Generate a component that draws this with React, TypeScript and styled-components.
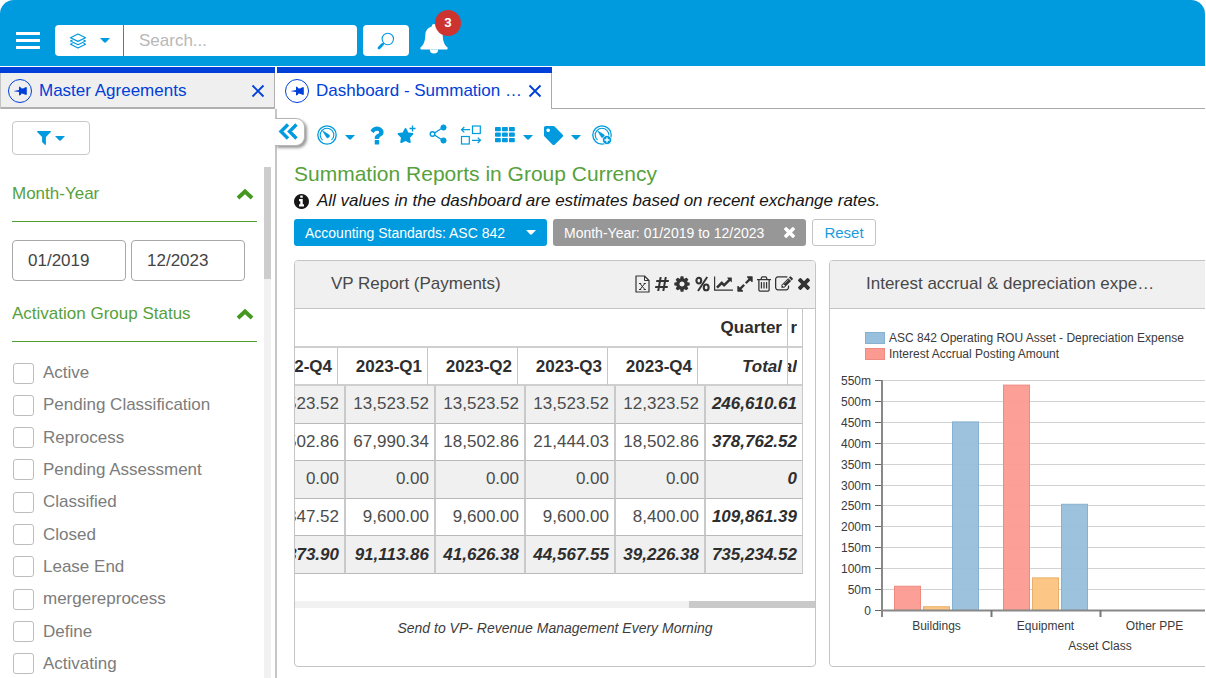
import React from "react";
import styled, { createGlobalStyle } from "styled-components";
import { FaHashtag, FaStar, FaTag } from "react-icons/fa";

const BLUE = "#009ade";
const NAVY = "#0040d8";
const LINE = "#c4c4c4";

const Global = createGlobalStyle`
  *, *::before, *::after { box-sizing: border-box; }
  body { margin: 0; background: #fff; color: #3c3c3c; font: 17px/20px "Liberation Sans", Arial, sans-serif; }
  button, input { font: inherit; }
  button { margin: 0; padding: 0; border: 0; background: none; color: inherit; cursor: pointer; display: inline-flex; align-items: center; justify-content: center; }
  svg { display: block; flex: none; }
`;

/* ---------- icons ---------- */

const GLYPHS = {
  close: "M1298 1322q0 40-28 68l-136 136q-28 28-68 28t-68-28l-294-294-294 294q-28 28-68 28t-68-28l-136-136q-28-28-28-68t28-68l294-294-294-294q-28-28-28-68t28-68l136-136q28-28 68-28t68 28l294 294 294-294q28-28 68-28t68 28l136 136q28 28 28 68t-28 68l-294 294 294 294q28 28 28 68z",
  chart: "M2048 1536v128h-2048v-1536h128v1408h1920zm-128-1248v435q0 21-19.5 29.5t-35.5-7.5l-121-121-633 633q-10 10-23 10t-23-10l-233-233-416 416-192-192 585-585q10-10 23-10t23 10l233 233 464-464-121-121q-16-16-7.5-35.5t29.5-19.5h435q14 0 23 9t9 23z",
  expand: "M883 1056q0 13-10 23l-332 332 144 144q19 19 19 45t-19 45-45 19h-448q-26 0-45-19t-19-45v-448q0-26 19-45t45-19 45 19l144 144 332-332q10-10 23-10t23 10l114 114q10 10 10 23zm781-864v448q0 26-19 45t-45 19-45-19l-144-144-332 332q-10 10-23 10t-23-10l-114-114q-10-10-10-23t10-23l332-332-144-144q-19-19-19-45t19-45 45-19h448q26 0 45 19t19 45z",
  gear: "M1152 896q0-106-75-181t-181-75-181 75-75 181 75 181 181 75 181-75 75-181zm512-109v222q0 12-8 23t-20 13l-185 28q-19 54-39 91 35 50 107 138 10 12 10 25t-9 23q-27 37-99 108t-94 71q-12 0-26-9l-138-108q-44 23-91 38-16 136-29 186-7 28-36 28h-222q-14 0-24.5-8.5t-11.5-21.5l-28-184q-49-16-90-37l-141 107q-10 9-25 9-14 0-25-11-126-114-165-168-7-10-7-23 0-12 8-23 15-21 51-66.5t54-70.5q-27-50-41-99l-183-27q-13-2-21-12.5t-8-23.5v-222q0-12 8-23t19-13l186-28q14-46 39-92-40-57-107-138-10-12-10-24 0-10 9-23 26-36 98.5-107.5t94.5-71.5q13 0 26 10l138 107q44-23 91-38 16-136 29-186 7-28 36-28h222q14 0 24.5 8.5t11.5 21.5l28 184q49 16 90 37l142-107q9-9 24-9 13 0 25 10 129 119 165 170 7 8 7 22 0 12-8 23-15 21-51 66.5t-54 70.5q26 50 41 98l183 28q13 2 21 12.5t8 23.5z",
  trash: "M704 736v576q0 14-9 23t-23 9h-64q-14 0-23-9t-9-23v-576q0-14 9-23t23-9h64q14 0 23 9t9 23zm256 0v576q0 14-9 23t-23 9h-64q-14 0-23-9t-9-23v-576q0-14 9-23t23-9h64q14 0 23 9t9 23zm256 0v576q0 14-9 23t-23 9h-64q-14 0-23-9t-9-23v-576q0-14 9-23t23-9h64q14 0 23 9t9 23zm128 724v-948h-896v948q0 22 7 40.5t14.5 27 10.5 8.500h832q3 0 10.500-8.500t14.500-27 7-40.500zm-672-1076h448l-48-117q-7-9-17-11h-317q-10 2-17 11zm928 32v64q0 14-9 23t-23 9h-96v948q0 83-47 143.500t-113 60.500h-832q-66 0-113-58.500t-47-141.500v-952h-96q-14 0-23-9t-9-23v-64q0-14 9-23t23-9h309l70-167q15-37 54-63t79-26h320q40 0 79 26t54 63l70 167h309q14 0 23 9t9 23z",
  edit: "M888 1184l116-116-152-152-116 116v56h96v96h56zm440-720q-16-16-33 1l-350 350q-17 17-1 33t33-1l350-350q17-17 1-33zm80 594v190q0 119-84.5 203.5t-203.5 84.5h-832q-119 0-203.5-84.5t-84.5-203.5v-832q0-119 84.5-203.5t203.5-84.5h832q63 0 117 25 15 7 18 23 3 17-9 29l-49 49q-14 14-32 8-23-6-45-6h-832q-66 0-113 47t-47 113v832q0 66 47 113t113 47h832q66 0 113-47t47-113v-126q0-13 9-22l64-64q15-15 35-7t20 29zm-96-738l288 288-672 672h-288v-288zm444 132l-92 92-288-288 92-92q28-28 68-28t68 28l152 152q28 28 28 68t-28 68z",
  filter: "M1595 295q17 41-14 70l-493 493v742q0 42-39 59-13 5-25 5-27 0-45-19l-256-256q-19-19-19-45v-486l-493-493q-31-29-14-70 17-39 59-39h1280q42 0 59 39z",
  question: "M1088 1256v240q0 16-12 28t-28 12h-240q-16 0-28-12t-12-28v-240q0-16 12-28t28-12h240q16 0 28 12t12 28zm316-600q0 54-15.5 101t-35 76.5-55 59.5-57.5 43.5-61 35.5q-41 23-68.5 65t-27.5 67q0 17-12 32.5t-28 15.5h-240q-15 0-25.5-18.5t-10.5-37.5v-45q0-83 65-156.5t143-108.5q59-27 84-56t25-76q0-42-46.5-74t-107.5-32q-65 0-108 29-35 25-107 115-13 16-31 16-12 0-25-8l-164-125q-13-10-15.5-25t5.5-28q160-266 464-266 80 0 161 31t146 83 106 127.5 41 158.5z",
  info: "M1152 1376v-160q0-14-9-23t-23-9h-96v-512q0-14-9-23t-23-9h-320q-14 0-23 9t-9 23v160q0 14 9 23t23 9h96v320h-96q-14 0-23 9t-9 23v160q0 14 9 23t23 9h448q14 0 23-9t9-23zm-128-896v-160q0-14-9-23t-23-9h-192q-14 0-23 9t-9 23v160q0 14 9 23t23 9h192q14 0 23-9t9-23zm640 416q0 209-103 385.5t-279.5 279.5-385.5 103-385.5-103-279.5-279.5-103-385.5 103-385.5 279.5-279.5 385.5-103 385.5 103 279.5 279.5 103 385.5z",
};

const Glyph = ({ name, size, box = "0 0 1792 1792" }: { name: keyof typeof GLYPHS; size: number; box?: string }) => (
  <svg width={size} height={size} viewBox={box} fill="currentColor" aria-hidden="true">
    <path d={GLYPHS[name]} />
  </svg>
);

const CLOSE_BOX = "110 366 1188 1188";

const Caret = () => (
  <svg width="10" height="5" viewBox="0 0 10 5" fill="currentColor" aria-hidden="true">
    <path d="M0 0h10L6 4.300Q5 5 4 4.300Z" />
  </svg>
);

const PinIcon = () => (
  <svg width="26" height="26" viewBox="0 0 26 26" fill="currentColor" aria-hidden="true">
    <circle cx="13" cy="13" r="11.500" fill="none" stroke="currentColor" />
    <path d="M7 12.900l5-.9V8.400q1.800.3 2.600 2.200 2.400-.2 3.600-1.300h1.600v7.400h-1.600q-1.200-1.100-3.600-1.300-.8 1.900-2.600 2.200V14l-5-.7z" />
  </svg>
);

const CrossIcon = () => (
  <svg width="14" height="14" viewBox="0 0 14 14" stroke="currentColor" strokeWidth="1.900" aria-hidden="true">
    <path d="M1.500 1.500l11 11M12.500 1.500l-11 11" />
  </svg>
);

const LayersIcon = () => (
  <svg width="18" height="16" viewBox="0 0 18 16" fill="none" stroke="currentColor" strokeWidth="1.200" strokeLinejoin="round" aria-hidden="true">
    <path d="M9 1l7.500 3.700L9 8.400 1.500 4.700z" />
    <path d="M3.500 7L1.500 8 9 11.700 16.500 8l-2-1" />
    <path d="M3.500 10.200l-2 1L9 15l7.500-3.800-2-1" />
  </svg>
);

const SearchIcon = () => (
  <svg width="18" height="18" viewBox="0 0 18 18" fill="none" stroke="currentColor" aria-hidden="true">
    <circle cx="10.800" cy="7" r="5.700" strokeWidth="1.100" />
    <path d="M6.800 11.200l-1.300 1.300" strokeWidth="1.200" />
    <path d="M5.400 12.600l-3.400 3.400" strokeWidth="2.800" strokeLinecap="round" />
  </svg>
);

const BellIcon = () => (
  <svg width="28" height="30" viewBox="0 0 28 30" fill="currentColor" aria-hidden="true">
    <path d="M14 0a2.200 2.200 0 0 1 2.200 2.500c4 1 6.300 4.300 6.500 8.500.2 6 1.300 9.500 4.600 12.300.8.800.4 2.200-.9 2.200H1.600C.3 25.500-.1 24.100.7 23.300 4 20.500 5.100 17 5.300 11c.2-4.200 2.500-7.500 6.500-8.500A2.200 2.200 0 0 1 14 0z" />
    <path d="M9.800 25.500h8.400a4.200 4 0 0 1-8.400 0z" />
  </svg>
);

const GaugeIcon = ({ plus = false }: { plus?: boolean }) => (
  <svg width="20" height="20" viewBox="0 0 20 20" fill="none" stroke="currentColor" aria-hidden="true">
    <circle cx="10" cy="10" r="9.200" strokeWidth="1.300" />
    <path d="M5.600 15.200a6.800 6.800 0 1 1 8.800 0" strokeWidth="1.100" />
    <path d="M5.200 5.400l6.500 4a1.800 1.800 0 1 1-2.600 2.300z" fill="currentColor" strokeWidth=".4" />
    {plus && (
      <>
        <circle cx="15" cy="15" r="4.600" fill="currentColor" stroke="#fff" strokeWidth=".8" />
        <path d="M15 12.500v5M12.500 15h5" stroke="#fff" strokeWidth="1.300" />
      </>
    )}
  </svg>
);

const StarPlusIcon = () => (
  <svg width="20" height="20" viewBox="0 0 20 20" aria-hidden="true">
    <FaStar x="0" y="2" width="19" height="18" />
    <circle cx="15.500" cy="3.500" r="3.700" fill="#fff" />
    <path d="M15.500 0.500v6M12.500 3.500h6" stroke="currentColor" strokeWidth="1.300" />
  </svg>
);

const ShareIcon = () => (
  <svg width="18" height="22" viewBox="0 0 18 22" fill="currentColor" stroke="currentColor" aria-hidden="true">
    <path d="M14 3.500L4 10l10 6.500" fill="none" strokeWidth="1.300" />
    <circle cx="14.500" cy="3.500" r="2.600" />
    <circle cx="14.500" cy="16.500" r="2.600" />
    <circle cx="3.500" cy="10" r="2.300" fill="#fff" strokeWidth="1.400" />
  </svg>
);

const SwapIcon = () => (
  <svg width="24" height="20" viewBox="0 0 24 20" fill="none" stroke="currentColor" strokeWidth="1.200" aria-hidden="true">
    <rect x="13.500" y="1" width="7.800" height="7.500" />
    <rect x="2.500" y="11.500" width="7.800" height="7.500" />
    <path d="M11 4.700H2.500M5.300 2L2.500 4.700l2.800 2.700" />
    <path d="M13 15.300h8.500M18.700 12.600l2.800 2.700-2.800 2.700" />
  </svg>
);

const GridIcon = () => (
  <svg width="20" height="16" viewBox="0 0 20 16" fill="currentColor" aria-hidden="true">
    {[0, 7, 14].map((x) => [0, 5.500, 11].map((y) => <rect key={`${x}-${y}`} x={x} y={y} width="5.800" height="4.300" rx=".8" />))}
  </svg>
);

const DoubleChevron = () => (
  <svg width="20" height="17" viewBox="0 0 20 17" fill="none" stroke="currentColor" strokeWidth="3.400" aria-hidden="true">
    <path d="M10 1.500l-7 7 7 7M18.500 1.500l-7 7 7 7" />
  </svg>
);

const ChevronUp = () => (
  <svg width="18" height="12" viewBox="0 0 18 12" fill="none" stroke="currentColor" strokeWidth="3.900" aria-hidden="true">
    <path d="M2 10l7-6.500 7 6.500" />
  </svg>
);

const ExcelIcon = () => (
  <svg width="15" height="18" viewBox="0 0 15 18" fill="none" stroke="currentColor" aria-hidden="true">
    <path d="M1 1h8.500L14 5.500V17H1z" strokeWidth="1.200" strokeLinejoin="round" />
    <path d="M9.500 1v4.500H14" />
    <path d="M5 8.500l4.800 6M9.800 8.500L5 14.500M4 8.500h2.200M8.700 8.500h2.200M4 14.500h2.200M8.700 14.500h2.200" />
  </svg>
);

const PercentIcon = () => (
  <svg width="15" height="16" viewBox="0 0 15 16" fill="none" stroke="currentColor" aria-hidden="true">
    <path d="M12.200 1L3 15" strokeWidth="1.900" />
    <ellipse cx="3.800" cy="4.600" rx="2.400" ry="2.900" strokeWidth="2.100" />
    <ellipse cx="11.200" cy="11.400" rx="2.400" ry="2.900" strokeWidth="2.100" />
  </svg>
);

/* ---------- shell ---------- */

const Shell = styled.div`
  height: 100vh;
  display: flex;
  flex-direction: column;
  gap: 1px;
  overflow: hidden;
  padding-right: 1px;
`;

const TopBar = styled.header`
  flex: none;
  display: flex;
  align-items: center;
  height: 66px;
  padding: 15px 16px 0;
  background: ${BLUE};
  border-radius: 14px 14px 0 0;
  color: #fff;
`;

const MenuButton = styled.button`
  flex-direction: column;
  gap: 4px;
  margin-right: 15px;
  span { width: 24px; height: 3px; background: #fff; }
`;

const SearchGroup = styled.form`
  display: flex;
  height: 31px;
  gap: 1px;
  color: ${BLUE};
`;

const ScopeButton = styled.button`
  width: 68px;
  gap: 13px;
  background: #fff;
  border-radius: 4px 0 0 4px;
`;

const SearchInput = styled.input`
  width: 233px;
  border: 0;
  padding: 0 15px;
  background: #fff;
  border-radius: 0 4px 4px 0;
  color: #444;
  outline: 0;
  &::placeholder { color: #b8b8b8; opacity: 1; }
`;

const SearchButton = styled.button`
  width: 46px;
  margin-left: 5px;
  background: #fff;
  border-radius: 4px;
`;

const BellButton = styled.button`
  position: relative;
  margin: 0 0 4px 11px;
`;

const Badge = styled.span`
  position: absolute;
  left: 15px;
  top: -14px;
  width: 26px;
  height: 26px;
  border-radius: 50%;
  background: #cd332f;
  font: 700 13px/26px Roboto, sans-serif;
`;

const Columns = styled.div`
  flex: 1;
  min-height: 0;
  display: grid;
  grid-template-columns: 277px minmax(0, 1fr);
`;

const Tab = styled.div<{ $active?: boolean }>`
  display: flex;
  align-items: center;
  gap: 6px;
  height: 42px;
  width: 275px;
  padding: 0 10px 0 7px;
  border-top: 6px solid ${NAVY};
  background: ${(p) => (p.$active ? "#fff" : "#efefef")};
  box-shadow: ${(p) => (p.$active ? "inset -1px 0 #aaa" : "inset 1px 0 #c4c4c4, inset -1px -2px #b0b0b0")};
  color: ${NAVY};
`;

const TabTitle = styled.span`
  flex: 1;
  min-width: 0;
  white-space: nowrap;
`;

/* ---------- sidebar ---------- */

const Sidebar = styled.aside`
  display: flex;
  flex-direction: column;
  min-height: 0;
`;

const Panel = styled.div`
  flex: 1;
  min-height: 0;
  display: flex;
  flex-direction: column;
  padding: 12px 4px 0 12px;
  border-right: 2px solid #c6c6c9;
`;

const FilterButton = styled.button`
  flex: none;
  width: 78px;
  height: 34px;
  gap: 4px;
  border: 1px solid #c8c8c8;
  border-radius: 4px;
  color: ${BLUE};
`;

const ScrollArea = styled.div`
  flex: 1;
  min-height: 0;
  display: flex;
  gap: 7px;
  margin-top: 12px;
  overflow: hidden;
`;

const Filters = styled.div`
  flex: 1;
`;

const VerticalTrack = styled.div`
  width: 7px;
  background: #f1f1f1;
  span { display: block; height: 112px; background: #cdcdcd; }
`;

const SectionHead = styled.button`
  display: flex;
  justify-content: space-between;
  width: 100%;
  padding: 17px 3px 17px 0;
  border-bottom: 1px solid #4fa030;
  color: #57a13c;
  svg { color: #44981f; }
`;

const Dates = styled.div`
  display: flex;
  gap: 5px;
  margin: 18px 0 6px;
`;

const DateInput = styled.input`
  width: 114px;
  height: 41px;
  padding: 0 15px;
  border: 1px solid #a8a8a8;
  border-radius: 4px;
  color: #444;
`;

const StatusList = styled.ul`
  display: grid;
  align-content: space-between;
  height: 313px;
  margin: 20px 0 0;
  padding: 0;
  list-style: none;
`;

const StatusLabel = styled.label`
  display: flex;
  align-items: center;
  gap: 9px;
  height: 22px;
  padding-left: 1px;
  color: #7c7c7c;
`;

const Check = styled.input`
  appearance: none;
  width: 21px;
  height: 21px;
  margin: 0;
  border: 1px solid #bdbdbd;
  border-radius: 3px;
`;

/* ---------- main ---------- */

const Main = styled.main`
  position: relative;
  min-width: 0;
`;

const TabStrip = styled.div`
  display: flex;
  &::after { content: ""; flex: 1; border-bottom: 1px solid #aaa; }
`;

const Collapse = styled.button`
  position: absolute;
  left: -2px;
  top: 51px;
  width: 30px;
  height: 28px;
  padding: 0 4px 2px 0;
  background: #fff;
  border: 1px solid #b5b5b5;
  border-left: 0;
  border-radius: 0 9px 9px 0;
  box-shadow: 2px 2px 3px #999;
  color: ${BLUE};
`;

const Content = styled.div`
  padding: 14px 0 0 17px;
  overflow: hidden;
`;

const Toolbar = styled.div`
  display: flex;
  gap: 12px;
  height: 24px;
  padding-left: 23px;
  color: ${BLUE};
`;

const Tool = styled.button<{ $w: number }>`
  width: ${(p) => p.$w}px;
  gap: 8px;
  > svg + svg { margin-top: 5px; }
`;

const Title = styled.h1`
  margin: 14px 0 3px;
  font-size: 21px;
  line-height: 26px;
  font-weight: 400;
  color: #57a13c;
`;

const Note = styled.p`
  display: flex;
  align-items: center;
  gap: 8px;
  margin: 0;
  line-height: 22px;
  font-style: italic;
  color: #161616;
`;

const Chips = styled.div`
  display: flex;
  gap: 6px;
  margin: 7px 0 14px;
`;

const Chip = styled.button<{ $bg: string }>`
  justify-content: space-between;
  width: 253px;
  height: 27px;
  padding: 0 11px;
  border-radius: 3px;
  background: ${(p) => p.$bg};
  color: #fff;
  font-size: 14px;
`;

const Reset = styled.button`
  width: 64px;
  height: 27px;
  border: 1px solid #c4c4c4;
  border-radius: 3px;
  color: #1a9cdc;
  font-size: 15px;
`;

const Cards = styled.div`
  display: grid;
  grid-template-columns: repeat(2, minmax(522px, 1fr));
  gap: 13px;
`;

const Card = styled.section`
  height: 407px;
  border: 1px solid ${LINE};
  border-radius: 4px;
  overflow: hidden;
`;

const CardHead = styled.div`
  display: flex;
  align-items: center;
  justify-content: space-between;
  height: 48px;
  padding: 0 4px 2px 36px;
  background: #f0f0f0;
  border-bottom: 1px solid ${LINE};
  color: #333;
`;

const CardTitle = styled.h2`
  margin: 0;
  font-size: 17px;
  font-weight: 400;
  color: #484848;
  white-space: nowrap;
`;

const Actions = styled.div`
  display: flex;
  gap: 4px;
`;

const Action = styled.button<{ $w?: number }>`
  width: ${(p) => p.$w ?? 16}px;
  height: 20px;
`;

const TableView = styled.div`
  display: flex;
  flex-direction: column;
  align-items: flex-end;
  padding-right: 12px;
  overflow: hidden;
`;

const Table = styled.table`
  flex: none;
  table-layout: fixed;
  border-collapse: separate;
  border-spacing: 0;
  text-align: right;
  white-space: nowrap;
  th, td { border-bottom: 1px solid #b9b9b9; border-right: 1px solid #c6c6c6; }
`;

const HeadTable = styled(Table)`
  width: 555px;
  height: 77px;
  color: #2e2e2e;
  th { padding: 2px 5px 0 0; border-bottom: 2px solid #cfcfcf; }
`;

const BodyTable = styled(Table)`
  width: 547px;
  height: 188px;
  color: #4c4c4c;
  td { padding: 0 5px 0 0; border-right: 2px solid #c9c9c9; }
  td:last-child { border-right-width: 1px; }
  tr:nth-child(odd) { background: #f0f0f0; }
  tr:last-child, td:last-child { font-weight: 700; font-style: italic; color: #2e2e2e; }
`;

const Clip = styled.div`
  display: flex;
  justify-content: flex-end;
  overflow: hidden;
`;

const HorizontalTrack = styled.div`
  display: flex;
  justify-content: flex-end;
  height: 7px;
  margin-top: 27px;
  background: #f1f1f1;
  span { width: 126px; background: #c9c9c9; }
`;

const Caption = styled.p`
  margin: 10px 0 0;
  font-size: 14px;
  font-style: italic;
  text-align: center;
`;

const Legend = styled.ul`
  display: grid;
  gap: 4px;
  margin: 23px 0 0;
  padding: 0 0 0 35px;
  list-style: none;
  font-size: 12px;
  line-height: 12px;
  color: #3a3a3a;
`;

const LegendItem = styled.li<{ $fill: string; $edge: string }>`
  display: flex;
  gap: 4px;
  &::before { content: ""; width: 20px; height: 12px; background: ${(p) => p.$fill}; border: 1px solid ${(p) => p.$edge}; }
`;

/* ---------- data ---------- */

const STATUSES = ["Active", "Pending Classification", "Reprocess", "Pending Assessment", "Classified", "Closed", "Lease End", "mergereprocess", "Define", "Activating"];

const QUARTERS = ["2022-Q4", "2023-Q1", "2023-Q2", "2023-Q3", "2023-Q4"];

const ROWS = [
  ["13,523.52", "13,523.52", "13,523.52", "13,523.52", "12,323.52", "246,610.61"],
  ["18,502.86", "67,990.34", "18,502.86", "21,444.03", "18,502.86", "378,762.52"],
  ["0.00", "0.00", "0.00", "0.00", "0.00", "0"],
  ["9,847.52", "9,600.00", "9,600.00", "9,600.00", "8,400.00", "109,861.39"],
  ["41,873.90", "91,113.86", "41,626.38", "44,567.55", "39,226.38", "735,234.52"],
];

const RED = { fill: "#fb9a91", edge: "#ee8a80" };
const ORANGE = { fill: "#fcc47f", edge: "#e9b06a" };
const SKY = { fill: "#98bfdb", edge: "#86b1d0" };

const CLASSES = [
  { name: "Buildings", values: [58, 9, 451] },
  { name: "Equipment", values: [539, 78, 254] },
  { name: "Other PPE", values: [] as number[] },
];

const Chart = () => {
  const left = 52, top = 20, bottom = 250, step = 109;
  const y = (v: number) => bottom - (v / 550) * (bottom - top);
  const ticks = Array.from({ length: 12 }, (_, i) => i * 50);
  return (
    <svg width="521" height="300" fontSize="12" fill="#3a3a3a" role="img" aria-label="Interest accrual and depreciation by asset class">
      {ticks.map((t) => {
        const ty = Math.round(y(t));
        return (
          <g key={t}>
            {t > 0 && <path d={`M${left} ${ty + 0.5}H488`} stroke="#d2d2d2" />}
            <path d={`M${left - 7} ${ty + 0.5}H${left}`} stroke="#666" />
            <text x={left - 11} y={ty + 5} textAnchor="end">{t ? `${t}m` : "0"}</text>
          </g>
        );
      })}
      {CLASSES.map((c, ci) => (
        <g key={c.name}>
          {c.values.map((v, i) => {
            const s = [RED, ORANGE, SKY][i];
            return <rect key={i} x={left + 12.5 + ci * step + i * 29} y={y(v) + 0.5} width="26" height={bottom - y(v)} fill={s.fill} fillOpacity=".95" stroke={s.edge} />;
          })}
          <text x={left + step / 2 + ci * step} y={bottom + 20} textAnchor="middle">{c.name}</text>
        </g>
      ))}
      <path d={`M${left} ${top}V${bottom + 7}`} stroke="#888" strokeWidth="2" />
      <path d={`M${left} ${bottom + 0.5}H488`} stroke="#888" strokeWidth="2" />
      {[1, 2, 3].map((i) => <path key={i} d={`M${left + i * step + 0.5} ${bottom}v7`} stroke="#777" strokeWidth="2" />)}
      <text x="270" y={bottom + 40} textAnchor="middle">Asset Class</text>
    </svg>
  );
};

export default function App() {
  return (
    <Shell>
      <Global />
      <TopBar>
        <MenuButton aria-label="Menu"><span /><span /><span /></MenuButton>
        <SearchGroup>
          <ScopeButton type="button" aria-label="Search scope"><LayersIcon /><Caret /></ScopeButton>
          <SearchInput aria-label="Search" placeholder="Search..." />
          <SearchButton type="button" aria-label="Run search"><SearchIcon /></SearchButton>
        </SearchGroup>
        <BellButton aria-label="Notifications"><BellIcon /><Badge>3</Badge></BellButton>
      </TopBar>

      <Columns>
        <Sidebar>
          <Tab>
            <PinIcon />
            <TabTitle>Master Agreements</TabTitle>
            <button aria-label="Close Master Agreements"><CrossIcon /></button>
          </Tab>
          <Panel>
            <FilterButton aria-label="Filter"><Glyph name="filter" size={14} box="192 256 1408 1408" /><Caret /></FilterButton>
            <ScrollArea>
              <Filters>
                <SectionHead>Month-Year<ChevronUp /></SectionHead>
                <Dates>
                  <DateInput aria-label="From month" defaultValue="01/2019" />
                  <DateInput aria-label="To month" defaultValue="12/2023" />
                </Dates>
                <SectionHead>Activation Group Status<ChevronUp /></SectionHead>
                <StatusList>
                  {STATUSES.map((s) => (
                    <li key={s}><StatusLabel><Check type="checkbox" />{s}</StatusLabel></li>
                  ))}
                </StatusList>
              </Filters>
              <VerticalTrack><span /></VerticalTrack>
            </ScrollArea>
          </Panel>
        </Sidebar>

        <Main>
          <TabStrip>
            <Tab $active>
              <PinIcon />
              <TabTitle>Dashboard - Summation …</TabTitle>
              <button aria-label="Close Dashboard"><CrossIcon /></button>
            </Tab>
          </TabStrip>
          <Collapse aria-label="Collapse sidebar"><DoubleChevron /></Collapse>
          <Content>
            <Toolbar>
              <Tool $w={38} aria-label="Dashboards"><GaugeIcon /><Caret /></Tool>
              <Tool $w={18} aria-label="Help"><Glyph name="question" size={25} box="196 0 1400 1792" /></Tool>
              <Tool $w={20} aria-label="Add to favourites"><StarPlusIcon /></Tool>
              <Tool $w={18} aria-label="Share"><ShareIcon /></Tool>
              <Tool $w={24} aria-label="Rearrange"><SwapIcon /></Tool>
              <Tool $w={37} aria-label="Grid layout"><GridIcon /><Caret /></Tool>
              <Tool $w={36} aria-label="Tags"><FaTag size={19} /><Caret /></Tool>
              <Tool $w={20} aria-label="Add dashboard"><GaugeIcon plus /></Tool>
            </Toolbar>
            <Title>Summation Reports in Group Currency</Title>
            <Note><Glyph name="info" size={15} box="128 128 1536 1536" />All values in the dashboard are estimates based on recent exchange rates.</Note>
            <Chips>
              <Chip $bg={BLUE}>Accounting Standards: ASC 842<Caret /></Chip>
              <Chip $bg="#979797">Month-Year: 01/2019 to 12/2023<Glyph name="close" size={11} box={CLOSE_BOX} /></Chip>
              <Reset>Reset</Reset>
            </Chips>
            <Cards>
              <Card>
                <CardHead>
                  <CardTitle>VP Report (Payments)</CardTitle>
                  <Actions>
                    <Action aria-label="Export to Excel"><ExcelIcon /></Action>
                    <Action aria-label="Number format"><FaHashtag size={16} /></Action>
                    <Action aria-label="Settings"><Glyph name="gear" size={16} box="96 96 1600 1600" /></Action>
                    <Action aria-label="Percent"><PercentIcon /></Action>
                    <Action $w={19} aria-label="Chart"><Glyph name="chart" size={19} box="0 0 2048 1792" /></Action>
                    <Action $w={15} aria-label="Expand"><Glyph name="expand" size={16} box="96 96 1600 1600" /></Action>
                    <Action $w={15} aria-label="Delete"><Glyph name="trash" size={16} box="96 96 1600 1600" /></Action>
                    <Action $w={17} aria-label="Edit"><Glyph name="edit" size={18} /></Action>
                    <Action $w={15} aria-label="Remove"><Glyph name="close" size={12} box={CLOSE_BOX} /></Action>
                  </Actions>
                </CardHead>
                <TableView>
                  <HeadTable>
                    <colgroup>
                      {QUARTERS.map((q) => <col key={q} width="90" />)}
                      <col width="90" />
                      <col width="15" />
                    </colgroup>
                    <thead>
                      <tr>
                        <th colSpan={6}>Quarter</th>
                        <th><Clip>r</Clip></th>
                      </tr>
                      <tr>
                        {QUARTERS.map((q) => <th key={q}>{q}</th>)}
                        <th><i>Total</i></th>
                        <th><Clip><i>al</i></Clip></th>
                      </tr>
                    </thead>
                  </HeadTable>
                  <BodyTable>
                    <colgroup>
                      {QUARTERS.map((q) => <col key={q} width="90" />)}
                      <col width="97" />
                    </colgroup>
                    <tbody>
                      {ROWS.map((r) => <tr key={r[5]}>{r.map((v, i) => <td key={i}>{v}</td>)}</tr>)}
                    </tbody>
                  </BodyTable>
                </TableView>
                <HorizontalTrack><span /></HorizontalTrack>
                <Caption>Send to VP- Revenue Management Every Morning</Caption>
              </Card>
              <Card>
                <CardHead>
                  <CardTitle>Interest accrual &amp; depreciation expe…</CardTitle>
                </CardHead>
                <Legend>
                  <LegendItem $fill={SKY.fill} $edge={SKY.edge}>ASC 842 Operating ROU Asset - Depreciation Expense</LegendItem>
                  <LegendItem $fill={RED.fill} $edge={RED.edge}>Interest Accrual Posting Amount</LegendItem>
                </Legend>
                <Chart />
              </Card>
            </Cards>
          </Content>
        </Main>
      </Columns>
    </Shell>
  );
}
